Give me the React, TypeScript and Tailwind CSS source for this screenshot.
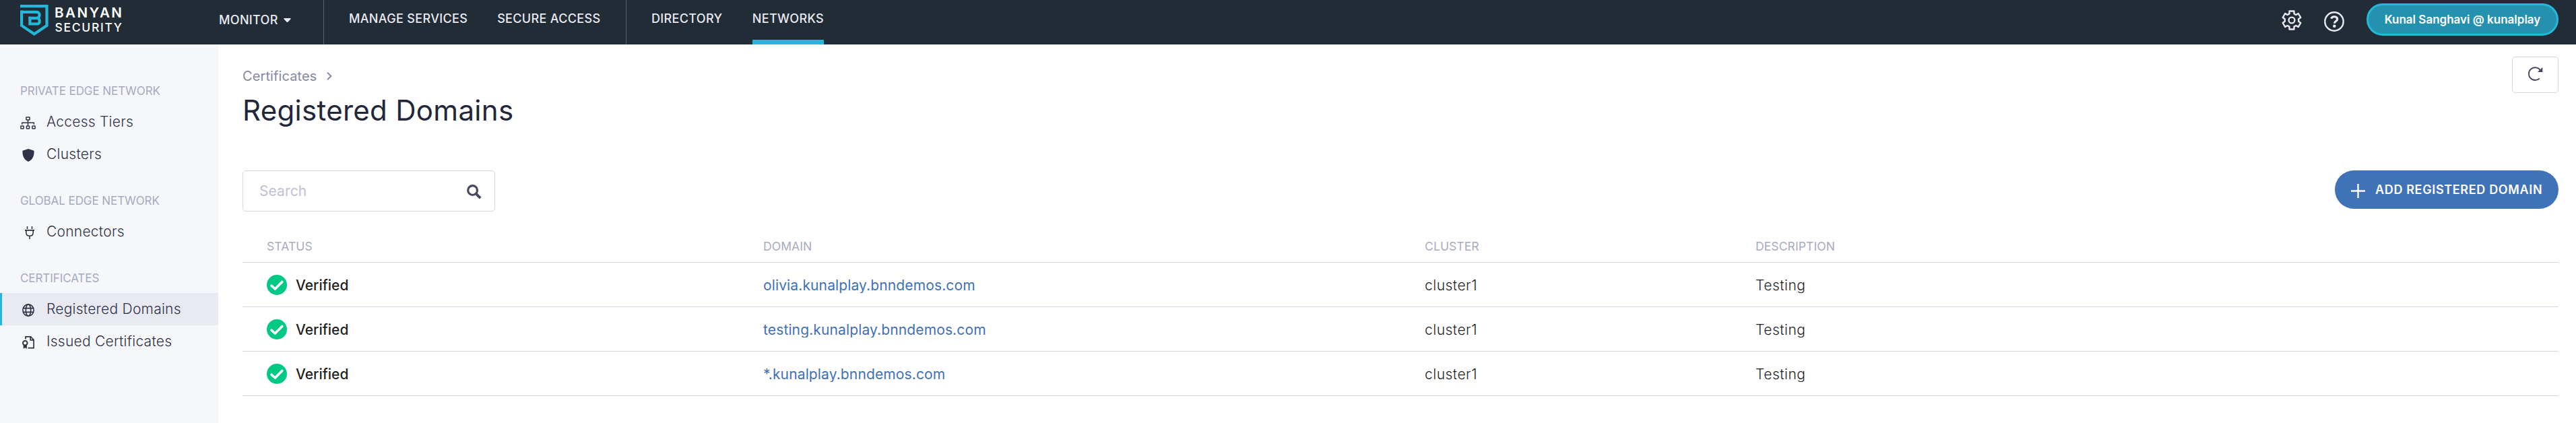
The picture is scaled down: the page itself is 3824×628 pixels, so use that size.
import React from 'react';

type IconProps = { className?: string };

const LogoIcon = ({ className }: IconProps) => (
  <svg className={className} width={42} height={46} viewBox="0 0 42 46" fill="none" stroke="#22b8d9" strokeWidth={4.2}>
    <path d="M0 2.1H39.5V31L20.8 43.5L2.1 31V8.6" />
    <path d="M2 10.8H24.5C30 10.8 30 19.8 24.5 19.8H14.4V28.5H25C30 28.5 30 19.8 25 19.8" />
    <path d="M12.3 19.8H16" />
  </svg>
);

const GearIcon = () => (
  <svg width={30} height={30} viewBox="0 0 30 30" fill="none" stroke="#e9e9f2" strokeWidth={2.4} strokeLinejoin="round">
    <path d="M11.5 1.5H18.5V5.4L21.3 7L24.8 5.1L28.3 11L25.2 13.2V16.8L28.3 19L24.8 24.9L21.3 23L18.5 24.6V28.5H11.5V24.6L8.7 23L5.2 24.9L1.7 19L4.8 16.8V13.2L1.7 11L5.2 5.1L8.7 7L11.5 5.4Z" />
    <circle cx={15} cy={15} r={4.4} />
  </svg>
);

const HelpIcon = () => (
  <svg width={30} height={30} viewBox="0 0 30 30" fill="none" stroke="#e9e9f2">
    <circle cx={15} cy={15} r={13.7} strokeWidth={2.4} />
    <path d="M10.6 10.6C12 6.6 19.6 6.8 19.6 11.4C19.6 14.6 15.4 14.6 15.4 17.8" strokeWidth={3.2} />
    <circle cx={15.3} cy={21.7} r={2.3} fill="#e9e9f2" stroke="none" />
  </svg>
);

const TiersIcon = () => (
  <svg width={23} height={19} viewBox="0 0 23 19" fill="none" stroke="#2f3346" strokeWidth={1.5}>
    <rect x={8.9} y={0.9} width={5.2} height={4} rx={0.6} />
    <rect x={0.9} y={13.9} width={4.2} height={4.2} rx={0.6} />
    <rect x={9.4} y={13.9} width={4.2} height={4.2} rx={0.6} />
    <rect x={17.9} y={13.9} width={4.2} height={4.2} rx={0.6} />
    <path d="M11.5 5V13.5M2.7 11.8V9.2H20.3V11.8" />
  </svg>
);

const ShieldIcon = () => (
  <svg width={18} height={19} viewBox="0 0 18 19" fill="#2f3346">
    <path d="M9 0L16.8 2.6Q17.6 2.9 17.6 3.8C17.6 10.8 15.6 16 9 19C2.4 16 0.4 10.8 0.4 3.8Q0.4 2.9 1.2 2.6Z" />
  </svg>
);

const PlugIcon = () => (
  <svg width={14} height={19} viewBox="0 0 14 19" fill="none" stroke="#2f3346" strokeWidth={1.6}>
    <path d="M3.5 0V4M10.5 0V4M0 5.9H14M1.8 6V9.5C1.8 12.5 3.8 14.2 7 14.2C10.2 14.2 12.2 12.5 12.2 9.5V6M7 14.2V19" />
  </svg>
);

const GlobeIcon = () => (
  <svg width={18} height={19} viewBox="0 0 18 19" fill="none" stroke="#2f3346" strokeWidth={1.6}>
    <ellipse cx={9} cy={9.5} rx={8.1} ry={8.6} />
    <ellipse cx={9} cy={9.5} rx={3.7} ry={8.6} />
    <path d="M1.4 6.6H16.6M1.4 12.4H16.6" />
  </svg>
);

const CertificateIcon = () => (
  <svg width={18} height={19} viewBox="0 0 18 19" fill="none" stroke="#2f3346">
    <path d="M5 4.5V0.9H12.5L17.1 5.5V17.6H8.5M12.2 1V5.8H17" strokeWidth={1.7} />
    <circle cx={4.3} cy={10.3} r={3.3} strokeWidth={2} />
    <path d="M1.7 13H6.9V18.8L4.3 17.2L1.7 18.8Z" fill="#2f3346" stroke="none" />
  </svg>
);

const SearchIcon = () => (
  <svg width={22} height={22} viewBox="0 0 22 22" fill="none" stroke="#464a60">
    <circle cx={8.6} cy={8.6} r={6.9} strokeWidth={3.2} />
    <path d="M13.4 13.4L20.2 20.2" strokeWidth={4} />
  </svg>
);

const RefreshIcon = () => (
  <svg width={22} height={22} viewBox="0 0 22 22" fill="none" stroke="#464a60">
    <path d="M17 17.3A9.4 9.4 0 1 1 18 5.2" strokeWidth={1.9} />
    <path d="M21.3 0.8V8H14Z" fill="#464a60" stroke="none" />
  </svg>
);

const CheckIcon = () => (
  <svg width={30} height={30} viewBox="0 0 30 30" fill="none">
    <circle cx={15} cy={15} r={15} fill="#00c983" />
    <path d="M7 16.2L12.4 21L22.8 10.4" stroke="#fff" strokeWidth={3.6} strokeLinecap="round" strokeLinejoin="round" />
  </svg>
);

const menus = [
  {
    title: 'PRIVATE EDGE NETWORK',
    items: [
      { label: 'Access Tiers', icon: <TiersIcon />, iconClass: 'pl-0' },
      { label: 'Clusters', icon: <ShieldIcon />, iconClass: 'pl-[3px]' },
    ],
  },
  {
    title: 'GLOBAL EDGE NETWORK',
    items: [{ label: 'Connectors', icon: <PlugIcon />, iconClass: 'pl-[7px]' }],
  },
  {
    title: 'CERTIFICATES',
    items: [
      { label: 'Registered Domains', icon: <GlobeIcon />, iconClass: 'pl-[3px]', active: true },
      { label: 'Issued Certificates', icon: <CertificateIcon />, iconClass: 'pl-[3px]' },
    ],
  },
];

const domains = ['olivia.kunalplay.bnndemos.com', 'testing.kunalplay.bnndemos.com', '*.kunalplay.bnndemos.com'];

const Header = () => (
  <header className="flex h-[66px] bg-[#222c36] text-[18px] leading-[22px] font-medium tracking-[0.33px] text-[#e9e9f2]">
    <div className="flex w-[325px] gap-[9px] pt-[7px] pl-[30px]">
      <LogoIcon />
      <svg width={106} height={46} fill="#fff" className="tracking-normal">
        <text x={0} y={19.4} fontSize={20.6} fontWeight={600} textLength={100}>BANYAN</text>
        <text x={0.5} y={39.6} fontSize={17.5} fontWeight={500} textLength={99.5}>SECURITY</text>
      </svg>
    </div>
    <nav className="flex">
      <div className="flex w-[156px] gap-[8px] border-r border-[#566074] pt-[19px]">
        <span>MONITOR</span>
        <svg width={11} height={22} fill="#e9e9f2">
          <path d="M0.8 8H10.2Q11 8.6 10.4 9.4L6.3 13.7Q5.5 14.3 4.7 13.7L0.6 9.4Q0 8.6 0.8 8Z" />
        </svg>
      </div>
      <div className="flex w-[449px] gap-11 border-r border-[#566074] pt-[17px] pl-[37px]">
        <span>MANAGE SERVICES</span>
        <span>SECURE ACCESS</span>
      </div>
      <div className="flex gap-[44.5px] pl-[37px]">
        <span className="pt-[17px]">DIRECTORY</span>
        <span className="border-b-[7px] border-[#22b8d9] pt-[17px]">NETWORKS</span>
      </div>
    </nav>
    <div className="ml-auto flex items-start pt-[5px] pr-[26px] tracking-normal">
      <div className="mt-[10px] mr-[33px]"><GearIcon /></div>
      <div className="mt-3 mr-[33px]"><HelpIcon /></div>
      <div className="flex h-12 w-[285px] items-center justify-center rounded-full border-[3px] border-[#22b8d9] bg-[#2492ae] text-[17px] font-semibold text-white">
        Kunal Sanghavi @ kunalplay
      </div>
    </div>
  </header>
);

const Sidebar = () => (
  <aside className="w-[324px] shrink-0 bg-[#f6f7fb] pt-6">
    {menus.map((menu) => (
      <div key={menu.title}>
        <div className="flex h-[67px] items-end pb-[11px] pl-[30px] text-[17px] leading-[22px] tracking-[-0.08px] text-[#a8aabf]">
          {menu.title}
        </div>
        {menu.items.map((item) => (
          <div
            key={item.label}
            className={
              item.active
                ? 'flex h-12 items-center border-l-[3px] border-[#22b8d9] bg-[#e9e9f2] pl-[27px]'
                : 'flex h-12 items-center pl-[30px]'
            }
          >
            <div className={`flex w-[39px] pt-[3px] ${item.iconClass}`}>{item.icon}</div>
            <span className="text-[21px] leading-6 font-light tracking-[0.25px] text-[#2f3346]">{item.label}</span>
          </div>
        ))}
      </div>
    ))}
  </aside>
);

const DomainTable = () => (
  <div className="mt-8 text-[21px] text-[#1f1f1f]">
    <div className="grid h-11 grid-cols-[737px_982px_491px_1fr] border-b border-[#d6d6e2] pt-[9px] pl-9 text-[17.5px] leading-[22px] tracking-[0.1px] text-[#a8aabf]">
      <span>STATUS</span>
      <span>DOMAIN</span>
      <span>CLUSTER</span>
      <span>DESCRIPTION</span>
    </div>
    {domains.map((domain) => (
      <div key={domain} className="grid h-[66px] grid-cols-[737px_982px_491px_1fr] items-center border-b border-[#d6d6e2] pl-9">
        <div className="flex items-center gap-[13px] pt-px">
          <CheckIcon />
          <span className="pt-px leading-6 font-medium">Verified</span>
        </div>
        <span className="mt-0.5 h-[22px] overflow-hidden leading-[21px] tracking-[0.13px] text-[#3f70b8]">{domain}</span>
        <span className="mt-0.5 h-[22px] overflow-hidden leading-[21px] font-light tracking-[0.5px]">cluster1</span>
        <span className="mt-0.5 h-[22px] overflow-hidden leading-[21px] font-light tracking-[0.5px]">Testing</span>
      </div>
    ))}
  </div>
);

const App = () => {
  return (
    <div className="flex h-[628px] w-full flex-col overflow-hidden bg-white font-['Inter',sans-serif]">
      <Header />
      <div className="flex min-h-0 flex-1">
        <Sidebar />
        <main className="flex-1 pt-[18px] pr-[26px] pl-9">
          <div className="flex items-start justify-between">
            <div className="pt-[17px]">
              <div className="flex items-center gap-[15px] text-[20px] leading-6 tracking-[0.1px] text-[#8588a3]">
                Certificates
                <svg width={8} height={12} viewBox="0 0 8 12" fill="none" stroke="#8588a3" strokeWidth={1.9}>
                  <path d="M1 0.8L6.4 6L1 11.2" />
                </svg>
              </div>
              <h1 className="mt-[14px] text-[42px] leading-[50px] tracking-[0.3px] text-[#23273a]">Registered Domains</h1>
            </div>
            <button className="flex h-[54px] w-[69px] items-center justify-center rounded-[5px] border border-[#d6d6e2] pb-[3px]">
              <RefreshIcon />
            </button>
          </div>
          <div className="mt-16 flex items-start justify-between">
            <div className="flex h-[61px] w-[375px] items-center justify-between rounded-[5px] border border-[#d6d6e2] pr-[19px] pl-6 text-[21px] tracking-[0.1px] text-[#bfc1d6]">
              <span>Search</span>
              <div className="pt-0.5"><SearchIcon /></div>
            </div>
            <button className="flex h-[57px] w-[332px] items-center gap-[15px] rounded-full bg-[#4072b8] pl-6 text-[18px] font-semibold tracking-[0.65px] whitespace-nowrap text-white">
              <svg className="mt-[3px] shrink-0" width={21} height={21} viewBox="0 0 21 21" stroke="#fff" strokeWidth={2.4}>
                <path d="M10.5 0V21M0 10.5H21" />
              </svg>
              <span className="-mt-px">ADD REGISTERED DOMAIN</span>
            </button>
          </div>
          <DomainTable />
        </main>
      </div>
    </div>
  );
};

export default App;
